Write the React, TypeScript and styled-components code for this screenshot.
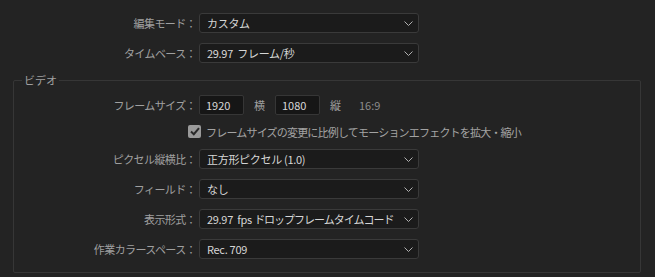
import React from 'react';
import styled, { createGlobalStyle } from 'styled-components';

const GlobalStyle = createGlobalStyle`
  html, body {
    margin: 0;
    padding: 0;
    background: #232323;
  }
  body {
    font-family: "Noto Sans CJK JP", "Noto Sans", sans-serif;
    font-size: 11px;
    color: #a3a3a3;
  }
`;

const Page = styled.div`
  width: 655px;
  height: 277px;
  box-sizing: border-box;
  padding: 13px 14px 0 13px;
  background: #232323;
  overflow: hidden;
`;

const Rows = styled.div`
  display: flex;
  flex-direction: column;
  gap: 10px;
`;

const Row = styled.div<{ $labelWidth: number }>`
  display: grid;
  grid-template-columns: ${(p) => p.$labelWidth}px auto;
  column-gap: 3px;
  align-items: center;
  height: 20px;
`;

const Label = styled.div`
  text-align: right;
  white-space: nowrap;
  letter-spacing: -0.6px;
  color: #a0a0a0;
`;

const SelectBox = styled.div`
  position: relative;
  width: 220px;
  height: 20px;
  box-sizing: border-box;
  border: 1px solid #3a3a3a;
  border-radius: 3px;
  background: #1b1b1b;
  display: flex;
  align-items: center;
  padding: 0 20px 0 7px;
  color: #d6d6d6;
  white-space: pre;
  overflow: hidden;
  letter-spacing: -0.3px;
`;

const Tight = styled.span`
  letter-spacing: -1px;
`;

const Chevron = styled.svg`
  position: absolute;
  right: 5px;
  top: 7px;
`;

const Group = styled.div`
  position: relative;
  margin-top: 17px;
  height: 193px;
  box-sizing: border-box;
  border: 1px solid #363636;
  border-radius: 2px;
  padding: 14px 0 0 0;
`;

const Legend = styled.div`
  position: absolute;
  top: -8px;
  left: 8px;
  padding: 0 2px;
  background: #232323;
  color: #a0a0a0;
  line-height: 14px;
`;

const Inline = styled.div`
  display: flex;
  align-items: center;
`;

const NumberInput = styled.div`
  width: 45px;
  height: 20px;
  box-sizing: border-box;
  border: 1px solid #363636;
  border-radius: 2px;
  background: #161616;
  color: #d6d6d6;
  padding-left: 6px;
  display: flex;
  align-items: center;
`;

const Unit = styled.span<{ $muted?: boolean }>`
  margin: ${(p) => (p.$muted ? '0 0 0 8px' : '0 10px')};
  color: ${(p) => (p.$muted ? '#8c8c8c' : '#a0a0a0')};
`;

const CheckRow = styled.div`
  display: flex;
  align-items: center;
  gap: 5px;
  padding-left: 174px;
  height: 15px;
  margin: -1px 0 0;
`;

const CheckBox = styled.span`
  width: 13px;
  height: 13px;
  border-radius: 2px;
  background: #9a9a9a;
  display: flex;
  align-items: center;
  justify-content: center;
`;

const CheckText = styled.span`
  letter-spacing: -0.8px;
  color: #a3a3a3;
  white-space: nowrap;
`;

const Select: React.FC<{ children: React.ReactNode }> = ({ children }) => (
  <SelectBox>
    {children}
    <Chevron width="9" height="6" viewBox="0 0 9 6">
      <polyline points="0.5,0.5 4.5,4.5 8.5,0.5" fill="none" stroke="#b0b0b0" strokeWidth="1" />
    </Chevron>
  </SelectBox>
);

const App: React.FC = () => (
  <Page>
    <GlobalStyle />
    <Rows>
      <Row $labelWidth={183}>
        <Label>編集モード：</Label>
        <Select>カスタム</Select>
      </Row>
      <Row $labelWidth={183}>
        <Label>タイムベース：</Label>
        <Select>{'29.97\u00a0\u00a0フレーム/秒'}</Select>
      </Row>
    </Rows>
    <Group>
      <Legend>ビデオ</Legend>
      <Rows>
        <Row $labelWidth={182}>
          <Label>フレームサイズ：</Label>
          <Inline>
            <NumberInput>1920</NumberInput>
            <Unit>横</Unit>
            <NumberInput>1080</NumberInput>
            <Unit>縦</Unit>
            <Unit $muted>16:9</Unit>
          </Inline>
        </Row>
        <CheckRow>
          <CheckBox>
            <svg width="10" height="9" viewBox="0 0 10 9">
              <polyline points="1,4.5 3.8,7.2 9,1.2" fill="none" stroke="#2a2a2a" strokeWidth="2" />
            </svg>
          </CheckBox>
          <CheckText>フレームサイズの変更に比例してモーションエフェクトを拡大・縮小</CheckText>
        </CheckRow>
        <Row $labelWidth={182}>
          <Label>ピクセル縦横比：</Label>
          <Select>正方形ピクセル (1.0)</Select>
        </Row>
        <Row $labelWidth={182}>
          <Label>フィールド：</Label>
          <Select>なし</Select>
        </Row>
        <Row $labelWidth={182}>
          <Label>表示形式：</Label>
          <Select>
            {'29.97\u00a0\u00a0fps '}
            <Tight>ドロップフレームタイムコード</Tight>
          </Select>
        </Row>
        <Row $labelWidth={182}>
          <Label>作業カラースペース：</Label>
          <Select>Rec. 709</Select>
        </Row>
      </Rows>
    </Group>
  </Page>
);

export default App;
